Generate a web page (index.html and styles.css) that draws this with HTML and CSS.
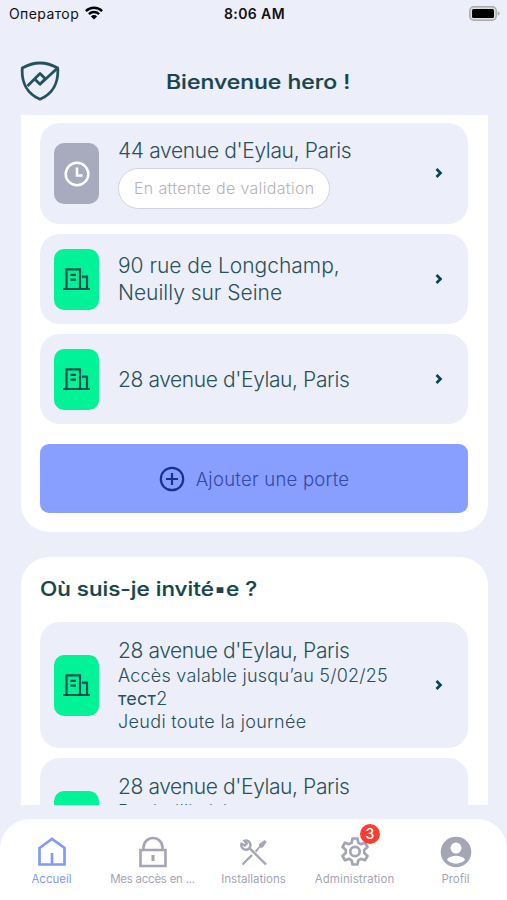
FILE: index.html
```html
<!DOCTYPE html>
<html lang="fr">
<head>
<meta charset="utf-8">
<title>Accueil</title>
<link rel="stylesheet" href="styles.css">
</head>
<body>
<svg class="defs" aria-hidden="true">
  <symbol id="building" viewBox="0 0 27 24">
    <path d="M0 22h27M3.500 22V2.300h13.500V22M19 9.700h5V22M7.500 7.800h5.500M7.500 12.700h5.500" fill="none" stroke="currentColor" stroke-width="2.200"/>
  </symbol>
  <symbol id="chevron" viewBox="0 0 8 12">
    <path d="M1.500 2l4 4-4 4" fill="none" stroke="currentColor" stroke-width="2.700"/>
  </symbol>
</svg>
<div class="app">
  <div class="status">
    <div class="carrier"><span class="operator">Оператор</span>
      <svg width="18" height="14" viewBox="0 0 18 14"><g fill="none" stroke="#000" stroke-width="2.500"><path d="M.9 5.100a11.500 11.500 0 0 1 16.200 0"/><path d="M3.900 8.200a7.200 7.200 0 0 1 10.200 0"/></g><path d="M5.900 10.400a4.400 4.400 0 0 1 6.200 0L9 13.600z"/></svg>
    </div>
    <span class="time">8:06 AM</span>
    <svg class="battery" width="31" height="15" viewBox="0 0 31 15"><rect x=".8" y=".8" width="26.400" height="13.400" rx="4" fill="#ddd" stroke="#aaa" stroke-width="1.500"/><rect x="3" y="3" width="22" height="9" rx="1.500"/><path d="M28.700 5.300q2 .8 2 2.200t-2 2.200z" fill="#aaa"/></svg>
  </div>
  <header class="header">
    <svg class="logo" width="40" height="40" viewBox="0 0 40 40"><g fill="none" stroke="#24525a" stroke-width="2.800" stroke-linejoin="round"><path d="M2.300 7Q20-3 37.700 7C38.800 21 33 32.500 20 38.200 7 32.500 1.200 21 2.300 7z"/><path d="M7.500 25L20 12.500l5.300 5.300L20 23.200l-5.300-5.300M20 23.200L37 7.500"/></g></svg>
    <h1 class="heading welcome">Bienvenue hero !</h1>
  </header>
  <main class="scroll">
    <section class="panel doors">
      <article class="card pending">
        <div class="tile waiting"><svg width="26" height="26" viewBox="0 0 26 26"><g fill="none" stroke="#fff" stroke-width="2.500"><circle cx="13" cy="13" r="11.300"/><path d="M13 6.500v8h5.500"/></g></svg></div>
        <div class="text"><p class="address first">44 avenue d'Eylau, Paris</p><span class="pill"><span>En attente de validation</span></span></div>
        <svg class="chevron"><use href="#chevron"/></svg>
      </article>
      <article class="card">
        <div class="tile"><svg class="building"><use href="#building"/></svg></div>
        <div class="text"><p class="address long">90 rue de Longchamp,<br>Neuilly sur Seine</p></div>
        <svg class="chevron"><use href="#chevron"/></svg>
      </article>
      <article class="card">
        <div class="tile"><svg class="building"><use href="#building"/></svg></div>
        <div class="text"><p class="address">28 avenue d'Eylau, Paris</p></div>
        <svg class="chevron"><use href="#chevron"/></svg>
      </article>
      <button class="add"><svg width="26" height="26" viewBox="0 0 26 26"><g fill="none" stroke="#16328f" stroke-width="2.200"><circle cx="13" cy="13" r="11.200"/><path d="M13 7v12M7 13h12"/></g></svg><span>Ajouter une porte</span></button>
    </section>
    <section class="panel invites">
      <h2 class="heading invited">Où suis-je invité▪e ?</h2>
      <article class="card guest">
        <div class="tile"><svg class="building"><use href="#building"/></svg></div>
        <div class="text"><p class="address">28 avenue d'Eylau, Paris</p><p class="detail">Accès valable jusqu’au 5/02/25</p><p class="detail"><span class="cyr">тест</span>2</p><p class="detail day">Jeudi toute la journée</p></div>
        <svg class="chevron"><use href="#chevron"/></svg>
      </article>
      <article class="card guest">
        <div class="tile"><svg class="building"><use href="#building"/></svg></div>
        <div class="text"><p class="address">28 avenue d'Eylau, Paris</p><p class="detail">Durée illimitée</p><p class="detail">&nbsp;</p><p class="detail">&nbsp;</p></div>
        <svg class="chevron"><use href="#chevron"/></svg>
      </article>
    </section>
  </main>
  <nav class="nav">
    <a class="item active"><svg width="30" height="32" viewBox="0 0 30 32"><path d="M2.500 12L15 3l12.500 9v16.500h-25zM15 17v11" fill="none" stroke="currentColor" stroke-width="2.700"/></svg><span>Accueil</span></a>
    <a class="item"><svg width="30" height="32" viewBox="0 0 30 32"><g fill="none" stroke="currentColor" stroke-width="2.600"><path d="M2.500 14h25v16h-25zM5.500 14v-2.500a9.500 9.500 0 0 1 19 0V14"/><path d="M15 19v6" stroke-width="3"/></g></svg><span class="tight">Mes accès en ...</span></a>
    <a class="item"><svg width="30" height="32" viewBox="0 0 30 32"><g fill="none" stroke="currentColor" stroke-width="2.400"><path d="M5.500 4.800a4.600 4.600 0 1 1-3 3l3.200 1.800 2-2zM10.200 11.800L27 28.500M3.500 28.500l9.500-9.500"/></g><path d="M17.500 16.500l-1.700-1.700 4-4 .4-2.900 5.500-4 2 2-4 5.500-2.900.4z" fill="currentColor"/></svg><span>Installations</span></a>
    <a class="item"><svg width="30" height="32" viewBox="0 0 30 32"><g fill="none" stroke="currentColor" stroke-width="2.700" stroke-linejoin="round"><path d="M12.500 2.500h5l.8 4.200 2.600 1.500 4.100-1.500 2.500 4.300-3.300 2.900v3.200l3.300 2.900-2.500 4.300-4.100-1.500-2.600 1.500-.8 4.200h-5l-.8-4.200-2.600-1.500L5 24.300 2.500 20l3.300-2.900v-3.200L2.500 11 5 6.700l4.100 1.500 2.600-1.500z"/><circle cx="15" cy="15.500" r="4.700"/></g></svg><b class="badge">3</b><span class="admin">Administration</span></a>
    <a class="item"><svg width="32" height="32" viewBox="0 0 32 32"><circle cx="16" cy="16" r="15.300" fill="currentColor"/><circle cx="16" cy="12" r="5.500" fill="#fff"/><path d="M6.800 23.500c4-5 14.400-5 18.400 0-4 5.500-14.400 5.500-18.400 0z" fill="#fff"/></svg><span>Profil</span></a>
  </nav>
</div>
</body>
</html>
```

FILE: styles.css
```css
* { box-sizing: border-box; }
body { margin: 0; background: #eceefa; font-family: Inter, "Liberation Sans", sans-serif; }
p, h1, h2 { margin: 0; }
.defs { position: absolute; width: 0; height: 0; }
.app { width: 507px; height: 900px; overflow: hidden; display: flex; flex-direction: column; background: #eceefa; }

.status { height: 28px; flex: none; display: grid; grid-template-columns: 1fr auto 1fr; padding: 0 7px 1px 9px; align-items: center; font-size: 14px; color: #111; }
.carrier { display: flex; align-items: center; gap: 6px; }
.carrier svg { margin-top: -2px; }
.operator { letter-spacing: .4px; }
.time { font-weight: 600; letter-spacing: .4px; }
.battery { justify-self: end; margin-top: -1px; }

.header { height: 87px; flex: none; display: flex; padding: 33px 0 0 20px; }
.logo { flex: none; }
.heading { font-weight: 500; font-size: 20px; line-height: 28px; color: #17454b; white-space: nowrap; transform-origin: left; width: max-content; -webkit-text-stroke: .2px #17454b; }
.welcome { margin: 7px 0 0 106px; transform: scaleX(1.15); }
.invited { transform: scaleX(1.127); }

.scroll { height: 690px; flex: none; overflow: hidden; padding: 0 20px 0 21px; }
.panel { background: #fff; padding: 0 19px; width: 467px; display: flex; flex-direction: column; gap: 10px; }
.doors { height: 417px; padding-top: 8px; border-radius: 0 0 28px 28px; }
.invites { margin-top: 25px; padding-top: 18px; border-radius: 28px 28px 0 0; }
.card { height: 90px; flex: none; border-radius: 20px; background: #eceefa; display: flex; align-items: center; padding: 0 25px 0 14px; width: 428px; color: #285158; }
.pending { height: 101px; }
.guest { height: 126px; }
.invited + .guest { margin-top: 9px; }
.tile { width: 45px; height: 61px; flex: none; border-radius: 10px; background: #00f497; color: #07524f; display: flex; align-items: center; justify-content: center; }
.waiting { background: #a8abbd; }
.building { width: 27px; height: 24px; }
.text { margin-left: 19px; flex: 1; white-space: nowrap; }
.chevron { width: 8px; height: 12px; color: #07474b; }
.address { font-size: 21px; line-height: 27px; font-weight: 300; letter-spacing: -.4px; }
.first { letter-spacing: -.35px; }
.long { letter-spacing: -.02px; }
.pending .text { margin-top: -2px; }
.pending .chevron { margin-top: -1px; }
.detail { font-size: 18px; line-height: 23px; font-weight: 300; letter-spacing: .23px; }
.day { letter-spacing: .33px; }
.cyr { font-weight: 400; }
.pill { display: flex; align-items: center; width: 212px; height: 41px; margin-top: 4px; padding: 0 0 1px 15px; border: 1.500px solid #d5d4de; border-radius: 21px; background: #fff; color: #b3b3b8; font-size: 16px; font-weight: 300; letter-spacing: .33px; }
.add { height: 69px; flex: none; margin-top: 10px; border: 0; border-radius: 9px; background: #899fff; color: #3448a2; font: 300 18.500px Inter, sans-serif; letter-spacing: .25px; display: flex; align-items: center; justify-content: center; gap: 11px; width: 428px; padding: 0; }

.nav { height: 81px; flex: none; margin-top: 14px; background: #fff; border-radius: 30px 30px 0 0; display: grid; grid-template-columns: repeat(5, 101px); justify-content: center; padding-top: 17px; }
.item { position: relative; display: flex; flex-direction: column; align-items: center; color: #a4a5b5; font-size: 11.500px; line-height: 16px; white-space: nowrap; gap: 3px; }
.active { color: #829bf8; }
.tight { letter-spacing: -.25px; }
.admin { letter-spacing: .1px; }
.badge { position: absolute; left: 56px; top: -12px; width: 20px; height: 20px; border-radius: 50%; background: #fa3d32; color: #fff; font-size: 14px; line-height: 20px; font-weight: 500; text-align: center; }
```
